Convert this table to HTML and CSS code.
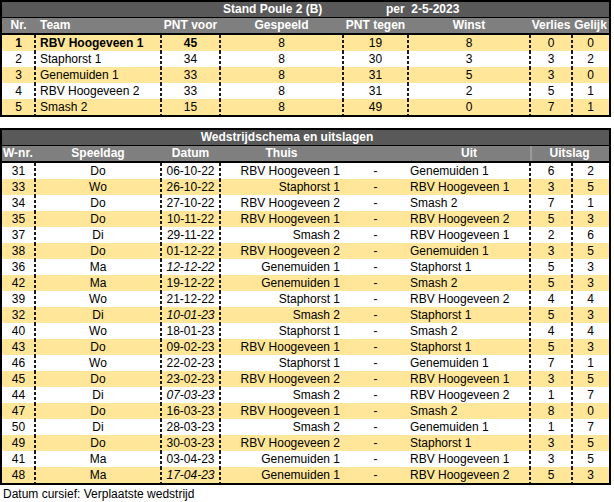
FILE: index.html
```html
<!DOCTYPE html>
<html>
<head>
<meta charset="utf-8">
<link rel="stylesheet" href="styles.css">
</head>
<body>
<div class="sheet">
  <div class="tbl">
    <div class="title title-stand"><span class="st1">Stand Poule 2 (B)</span><span>per&nbsp; 2-5-2023</span></div>
    <div class="hdr grid">
      <div class="c">Nr.</div>
      <div class="l">Team</div>
      <div class="c">PNT voor</div>
      <div class="c">Gespeeld</div>
      <div class="c">PNT tegen</div>
      <div class="c">Winst</div>
      <div class="c">Verlies</div>
      <div class="c">Gelijk</div>
    </div>
    <div class="row grid alt b">
      <div class="c">1</div><div class="l dash">RBV Hoogeveen 1</div><div class="c dash">45</div><div class="c dash n">8</div><div class="c dash n">19</div><div class="c dash n">8</div><div class="c dash n">0</div><div class="c dash n">0</div>
    </div>
    <div class="row grid">
      <div class="c">2</div><div class="l dash">Staphorst 1</div><div class="c dash">34</div><div class="c dash">8</div><div class="c dash">30</div><div class="c dash">3</div><div class="c dash">3</div><div class="c dash">2</div>
    </div>
    <div class="row grid alt">
      <div class="c">3</div><div class="l dash">Genemuiden 1</div><div class="c dash">33</div><div class="c dash">8</div><div class="c dash">31</div><div class="c dash">5</div><div class="c dash">3</div><div class="c dash">0</div>
    </div>
    <div class="row grid">
      <div class="c">4</div><div class="l dash">RBV Hoogeveen 2</div><div class="c dash">33</div><div class="c dash">8</div><div class="c dash">31</div><div class="c dash">2</div><div class="c dash">5</div><div class="c dash">1</div>
    </div>
    <div class="row grid alt">
      <div class="c">5</div><div class="l dash">Smash 2</div><div class="c dash">15</div><div class="c dash">8</div><div class="c dash">49</div><div class="c dash">0</div><div class="c dash">7</div><div class="c dash">1</div>
    </div>
  </div>

  <div class="tbl tbl2">
    <div class="title title-schema">Wedstrijdschema en uitslagen</div>
    <div class="hdr grid">
      <div class="l wn">W-nr.</div>
      <div class="c">Speeldag</div>
      <div class="c">Datum</div>
      <div class="c">Thuis</div>
      <div></div>
      <div class="c">Uit</div>
      <div class="c span2">Uitslag</div>
    </div>
    <div class="row grid"><div class="c">31</div><div class="c dash">Do</div><div class="c dash">06-10-22</div><div class="r dash">RBV Hoogeveen 1</div><div class="c">-</div><div class="l2">Genemuiden 1</div><div class="c dash">6</div><div class="c dash">2</div></div>
    <div class="row grid alt"><div class="c">33</div><div class="c dash">Wo</div><div class="c dash">26-10-22</div><div class="r dash">Staphorst 1</div><div class="c">-</div><div class="l2">RBV Hoogeveen 1</div><div class="c dash">3</div><div class="c dash">5</div></div>
    <div class="row grid"><div class="c">34</div><div class="c dash">Do</div><div class="c dash">27-10-22</div><div class="r dash">RBV Hoogeveen 2</div><div class="c">-</div><div class="l2">Smash 2</div><div class="c dash">7</div><div class="c dash">1</div></div>
    <div class="row grid alt"><div class="c">35</div><div class="c dash">Do</div><div class="c dash">10-11-22</div><div class="r dash">RBV Hoogeveen 1</div><div class="c">-</div><div class="l2">RBV Hoogeveen 2</div><div class="c dash">5</div><div class="c dash">3</div></div>
    <div class="row grid"><div class="c">37</div><div class="c dash">Di</div><div class="c dash">29-11-22</div><div class="r dash">Smash 2</div><div class="c">-</div><div class="l2">RBV Hoogeveen 1</div><div class="c dash">2</div><div class="c dash">6</div></div>
    <div class="row grid alt"><div class="c">38</div><div class="c dash">Do</div><div class="c dash">01-12-22</div><div class="r dash">RBV Hoogeveen 2</div><div class="c">-</div><div class="l2">Genemuiden 1</div><div class="c dash">3</div><div class="c dash">5</div></div>
    <div class="row grid"><div class="c">36</div><div class="c dash">Ma</div><div class="c dash i">12-12-22</div><div class="r dash">Genemuiden 1</div><div class="c">-</div><div class="l2">Staphorst 1</div><div class="c dash">5</div><div class="c dash">3</div></div>
    <div class="row grid alt"><div class="c">42</div><div class="c dash">Ma</div><div class="c dash">19-12-22</div><div class="r dash">Genemuiden 1</div><div class="c">-</div><div class="l2">Smash 2</div><div class="c dash">5</div><div class="c dash">3</div></div>
    <div class="row grid"><div class="c">39</div><div class="c dash">Wo</div><div class="c dash">21-12-22</div><div class="r dash">Staphorst 1</div><div class="c">-</div><div class="l2">RBV Hoogeveen 2</div><div class="c dash">4</div><div class="c dash">4</div></div>
    <div class="row grid alt"><div class="c">32</div><div class="c dash">Di</div><div class="c dash i">10-01-23</div><div class="r dash">Smash 2</div><div class="c">-</div><div class="l2">Staphorst 1</div><div class="c dash">5</div><div class="c dash">3</div></div>
    <div class="row grid"><div class="c">40</div><div class="c dash">Wo</div><div class="c dash">18-01-23</div><div class="r dash">Staphorst 1</div><div class="c">-</div><div class="l2">Smash 2</div><div class="c dash">4</div><div class="c dash">4</div></div>
    <div class="row grid alt"><div class="c">43</div><div class="c dash">Do</div><div class="c dash">09-02-23</div><div class="r dash">RBV Hoogeveen 1</div><div class="c">-</div><div class="l2">Staphorst 1</div><div class="c dash">5</div><div class="c dash">3</div></div>
    <div class="row grid"><div class="c">46</div><div class="c dash">Wo</div><div class="c dash">22-02-23</div><div class="r dash">Staphorst 1</div><div class="c">-</div><div class="l2">Genemuiden 1</div><div class="c dash">7</div><div class="c dash">1</div></div>
    <div class="row grid alt"><div class="c">45</div><div class="c dash">Do</div><div class="c dash">23-02-23</div><div class="r dash">RBV Hoogeveen 2</div><div class="c">-</div><div class="l2">RBV Hoogeveen 1</div><div class="c dash">3</div><div class="c dash">5</div></div>
    <div class="row grid"><div class="c">44</div><div class="c dash">Di</div><div class="c dash i">07-03-23</div><div class="r dash">Smash 2</div><div class="c">-</div><div class="l2">RBV Hoogeveen 2</div><div class="c dash">1</div><div class="c dash">7</div></div>
    <div class="row grid alt"><div class="c">47</div><div class="c dash">Do</div><div class="c dash">16-03-23</div><div class="r dash">RBV Hoogeveen 1</div><div class="c">-</div><div class="l2">Smash 2</div><div class="c dash">8</div><div class="c dash">0</div></div>
    <div class="row grid"><div class="c">50</div><div class="c dash">Di</div><div class="c dash">28-03-23</div><div class="r dash">Smash 2</div><div class="c">-</div><div class="l2">Genemuiden 1</div><div class="c dash">1</div><div class="c dash">7</div></div>
    <div class="row grid alt"><div class="c">49</div><div class="c dash">Do</div><div class="c dash">30-03-23</div><div class="r dash">RBV Hoogeveen 2</div><div class="c">-</div><div class="l2">Staphorst 1</div><div class="c dash">3</div><div class="c dash">5</div></div>
    <div class="row grid"><div class="c">41</div><div class="c dash">Ma</div><div class="c dash">03-04-23</div><div class="r dash">Genemuiden 1</div><div class="c">-</div><div class="l2">RBV Hoogeveen 1</div><div class="c dash">3</div><div class="c dash">5</div></div>
    <div class="row grid alt"><div class="c">48</div><div class="c dash">Ma</div><div class="c dash i">17-04-23</div><div class="r dash">Genemuiden 1</div><div class="c">-</div><div class="l2">RBV Hoogeveen 2</div><div class="c dash">5</div><div class="c dash">3</div></div>
  </div>
  <div class="note">Datum cursief: Verplaatste wedstrijd</div>
</div>
</body>
</html>
```

FILE: styles.css
```css
* { box-sizing: border-box; }
html, body { margin: 0; padding: 0; background: #ffffff; }
body {
  font-family: "Liberation Sans", Arial, sans-serif;
  font-size: 12px;
  color: #000000;
}
.sheet { width: 614px; }
.tbl {
  width: 611px;
  border: 2px solid #000000;
  background: #ffffff;
}
.tbl2 { margin-top: 11px; }
.grid {
  display: grid;
  grid-template-columns: 33px 126px 59px 123px 65px 122px 42px 37px;
}
.title {
  background: #595959;
  color: #ffffff;
  font-weight: bold;
  height: 15px;
  line-height: 15px;
  border-bottom: 1px solid #000000;
  box-sizing: content-box;
  white-space: nowrap;
}
.title-stand { display: flex; padding-left: 221px; }
.st1 { width: 163px; }
.title-schema { text-align: center; padding-right: 37px; }
.hdr {
  background: #7f7f7f;
  color: #ffffff;
  font-weight: bold;
  height: 17px;
  line-height: 15px;
  border-bottom: 2px solid #000000;
  white-space: nowrap;
}
.row {
  height: 16px;
  line-height: 16px;
  white-space: nowrap;
}
.alt { background-color: #ffe699; }
.b { font-weight: bold; }
.b .n { font-weight: normal; }
.c { text-align: center; }
.l { text-align: left; padding-left: 5px; }
.wn { padding-left: 1px; }
.r { text-align: right; padding-right: 3px; }
.l2 { text-align: left; padding-left: 2px; }
.i { font-style: italic; }
.dash {
  position: relative;
}
.dash::before {
  content: "";
  position: absolute;
  left: -1px;
  top: 0;
  bottom: 0;
  width: 2px;
  background: repeating-linear-gradient(to bottom, #1a1a1a 0px, #1a1a1a 3px, rgba(0,0,0,0) 3px, rgba(0,0,0,0) 5px);
}
.span2 { grid-column: span 2; box-shadow: inset 2px 0 0 #9a9a9a; }
.note {
  height: 16px;
  line-height: 16px;
  padding-left: 3px;
  padding-top: 1px;
  box-sizing: content-box;
}
```
